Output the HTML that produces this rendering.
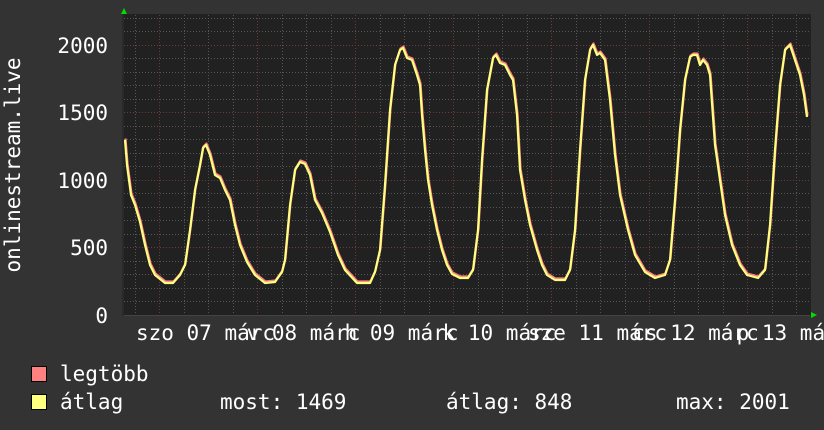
<!DOCTYPE html>
<html><head><meta charset="utf-8"><style>
html,body{margin:0;padding:0;background:#333333;width:824px;height:430px;overflow:hidden}
svg{display:block}
text{font-family:"DejaVu Sans Mono","Liberation Mono",monospace;fill:#fff;font-size:21px}
</style></head><body>
<svg width="824" height="430" viewBox="0 0 824 430" xmlns="http://www.w3.org/2000/svg">
<rect x="0" y="0" width="824" height="430" fill="#333333"/>
<rect x="122" y="14" width="689" height="302" fill="#212121"/>
<rect x="122" y="14" width="2" height="302" fill="#2a2a2a"/>
<g stroke="#555" stroke-width="1" stroke-dasharray="1,2">
<line x1="124" x2="810" y1="301.5" y2="301.5"/><line x1="124" x2="810" y1="288.5" y2="288.5"/><line x1="124" x2="810" y1="274.5" y2="274.5"/><line x1="124" x2="810" y1="261.5" y2="261.5"/>
<line x1="124" x2="810" y1="234.5" y2="234.5"/><line x1="124" x2="810" y1="220.5" y2="220.5"/><line x1="124" x2="810" y1="207.5" y2="207.5"/><line x1="124" x2="810" y1="193.5" y2="193.5"/>
<line x1="124" x2="810" y1="166.5" y2="166.5"/><line x1="124" x2="810" y1="153.5" y2="153.5"/><line x1="124" x2="810" y1="139.5" y2="139.5"/><line x1="124" x2="810" y1="126.5" y2="126.5"/>
<line x1="124" x2="810" y1="99.5" y2="99.5"/><line x1="124" x2="810" y1="85.5" y2="85.5"/><line x1="124" x2="810" y1="72.5" y2="72.5"/><line x1="124" x2="810" y1="58.5" y2="58.5"/>
<line x1="124" x2="810" y1="31.5" y2="31.5"/><line x1="124" x2="810" y1="18.5" y2="18.5"/>
<line y1="15" y2="318" x1="135.5" x2="135.5"/><line y1="15" y2="318" x1="184.5" x2="184.5"/><line y1="15" y2="318" x1="208.5" x2="208.5"/><line y1="15" y2="318" x1="233.5" x2="233.5"/>
<line y1="15" y2="318" x1="282.5" x2="282.5"/><line y1="15" y2="318" x1="306.5" x2="306.5"/><line y1="15" y2="318" x1="331.5" x2="331.5"/>
<line y1="15" y2="318" x1="380.5" x2="380.5"/><line y1="15" y2="318" x1="404.5" x2="404.5"/><line y1="15" y2="318" x1="429.5" x2="429.5"/>
<line y1="15" y2="318" x1="478.5" x2="478.5"/><line y1="15" y2="318" x1="502.5" x2="502.5"/><line y1="15" y2="318" x1="527.5" x2="527.5"/>
<line y1="15" y2="318" x1="576.5" x2="576.5"/><line y1="15" y2="318" x1="600.5" x2="600.5"/><line y1="15" y2="318" x1="625.5" x2="625.5"/>
<line y1="15" y2="318" x1="674.5" x2="674.5"/><line y1="15" y2="318" x1="698.5" x2="698.5"/><line y1="15" y2="318" x1="723.5" x2="723.5"/>
<line y1="15" y2="318" x1="772.5" x2="772.5"/><line y1="15" y2="318" x1="796.5" x2="796.5"/>
</g>
<g stroke="#6e3a3a" stroke-width="1" stroke-dasharray="1,2">
<line x1="124" x2="810" y1="247.5" y2="247.5"/><line x1="124" x2="810" y1="180.5" y2="180.5"/><line x1="124" x2="810" y1="112.5" y2="112.5"/><line x1="124" x2="810" y1="45.5" y2="45.5"/>
<line y1="15" y2="318" x1="159.5" x2="159.5"/><line y1="15" y2="318" x1="257.5" x2="257.5"/><line y1="15" y2="318" x1="355.5" x2="355.5"/><line y1="15" y2="318" x1="453.5" x2="453.5"/><line y1="15" y2="318" x1="551.5" x2="551.5"/><line y1="15" y2="318" x1="649.5" x2="649.5"/><line y1="15" y2="318" x1="747.5" x2="747.5"/>
</g>
<line x1="124" x2="810" y1="315.5" y2="315.5" stroke="#444"/>
<polygon points="121,14 127,14 124,8" fill="#00dd00"/>
<polygon points="811,312 811,318 817,315" fill="#00dd00"/>
<g fill="none" stroke-width="2.2" stroke-linejoin="round">
<polyline stroke="#ff8080" transform="translate(0.5,-1.5)" points="125,140 127,165 131,195 135,205 140,222 145,245 150,265 155,275 165,283 173,283 180,275 185,265 190,230 195,190 200,165 203,148 206,145 210,155 215,175 220,178 225,190 230,200 235,225 240,245 247,262 255,275 265,283 275,282 282,272 285,260 290,205 295,170 300,162 305,164 310,175 315,200 322,213 330,232 338,255 345,270 357,283 370,283 375,272 380,250 385,185 390,110 395,65 400,50 403,48 407,58 412,60 417,75 420,85 422,115 425,150 428,180 432,205 437,230 442,250 447,265 452,274 460,278 468,278 473,270 478,230 482,160 487,90 493,58 496,55 500,63 505,65 510,75 513,80 517,115 520,170 525,200 530,225 537,250 542,265 547,275 555,280 565,280 570,270 575,230 580,150 585,80 590,50 593,45 597,55 600,53 605,60 610,100 615,155 620,195 628,230 635,255 645,272 655,278 665,275 670,260 675,200 680,130 685,80 690,57 693,55 697,55 700,65 703,60 707,65 710,75 715,145 720,180 725,215 732,245 740,265 747,275 758,278 765,270 770,225 775,150 780,85 785,50 790,45 795,60 800,75 804,95 807,117"/>
<polyline stroke="#ffff80" points="125,140 127,165 131,195 135,205 140,222 145,245 150,265 155,275 165,283 173,283 180,275 185,265 190,230 195,190 200,165 203,148 206,145 210,155 215,175 220,178 225,190 230,200 235,225 240,245 247,262 255,275 265,283 275,282 282,272 285,260 290,205 295,170 300,162 305,164 310,175 315,200 322,213 330,232 338,255 345,270 357,283 370,283 375,272 380,250 385,185 390,110 395,65 400,50 403,48 407,58 412,60 417,75 420,85 422,115 425,150 428,180 432,205 437,230 442,250 447,265 452,274 460,278 468,278 473,270 478,230 482,160 487,90 493,58 496,55 500,63 505,65 510,75 513,80 517,115 520,170 525,200 530,225 537,250 542,265 547,275 555,280 565,280 570,270 575,230 580,150 585,80 590,50 593,45 597,55 600,53 605,60 610,100 615,155 620,195 628,230 635,255 645,272 655,278 665,275 670,260 675,200 680,130 685,80 690,57 693,55 697,55 700,65 703,60 707,65 710,75 715,145 720,180 725,215 732,245 740,265 747,275 758,278 765,270 770,225 775,150 780,85 785,50 790,45 795,60 800,75 804,95 807,117"/>
</g>
<g text-anchor="end">
<text x="108" y="53">2000</text><text x="108" y="120">1500</text><text x="108" y="188">1000</text><text x="108" y="255">500</text><text x="108" y="323">0</text>
</g>
<text transform="translate(20,165) rotate(-90)" text-anchor="middle">onlinestream.live</text>
<g text-anchor="middle">
<text x="205.5" y="340">szo 07 márc</text>
<text x="303.5" y="340">v 08 márc</text>
<text x="401.5" y="340">h 09 márc</text>
<text x="499.5" y="340">k 10 márc</text>
<text x="597.5" y="340">sze 11 márc</text>
<text x="695.5" y="340">cs 12 márc</text>
<text x="793.5" y="340">p 13 márc</text>
</g>
<rect x="31.5" y="366.5" width="15" height="15" fill="#ff8080" stroke="#000"/>
<rect x="31.5" y="394.5" width="15" height="15" fill="#ffff80" stroke="#000"/>
<text x="60" y="381">legtöbb</text>
<text x="60" y="409">átlag</text>
<text x="220" y="409">most: 1469</text>
<text x="446" y="409">átlag: 848</text>
<text x="676" y="409">max: 2001</text>
</svg>
</body></html>
